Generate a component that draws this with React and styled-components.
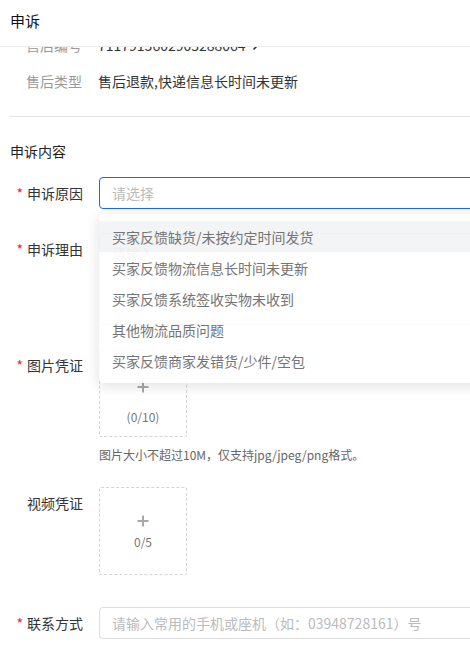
import React, { useLayoutEffect, useRef } from "react";
import styled, { createGlobalStyle } from "styled-components";

const Global = createGlobalStyle`
  html, body { margin: 0; padding: 0; background: #fff; }
  body {
    font-family: "Noto Sans CJK SC", "Noto Sans", sans-serif;
    color: #333;
    overflow: hidden;
  }
  * { box-sizing: border-box; }
`;

const Page = styled.div`
  width: 470px;
  height: 668px;
  display: flex;
  flex-direction: column;
  overflow: hidden;
`;

const Header = styled.header`
  height: 47px;
  flex: none;
  display: flex;
  align-items: center;
  padding: 0 10px 6px;
  font-size: 15px;
  color: #111;
  border-bottom: 1px solid #ebebeb;
  background: #fff;
`;

const Body = styled.div`
  flex: 1;
  overflow-y: auto;
  overflow-x: hidden;
  scrollbar-width: none;
  &::-webkit-scrollbar { display: none; }
  padding: 12px 0 40px 10px;
`;

const InfoRow = styled.div`
  display: flex;
  align-items: center;
  height: 36px;
  font-size: 14px;
`;

const InfoLabel = styled.div`
  width: 72px;
  text-align: right;
  color: #999;
  margin-right: 16px;
  flex: none;
`;

const InfoValue = styled.div`
  color: #333;
  display: flex;
  align-items: center;
  gap: 6px;
  white-space: nowrap;
`;

const Divider = styled.div`
  height: 1px;
  background: #e4e4e4;
  margin: 17px 0 0 -1px;
`;

const SectionTitle = styled.div`
  margin-top: 24px;
  line-height: 20px;
  font-size: 14px;
  color: #222;
`;

const Form = styled.div`
  margin-top: 16px;
  display: flex;
  flex-direction: column;
`;

const FormItem = styled.div`
  display: flex;
  align-items: flex-start;
  margin-bottom: ${(p) => p.$gap ?? 24}px;
`;

const Label = styled.div`
  width: 73px;
  flex: none;
  margin-right: 16px;
  display: flex;
  justify-content: flex-end;
  align-items: center;
  line-height: 32px;
  font-size: 14px;
  color: #333;
  white-space: nowrap;
`;

const Star = styled.span`
  color: #f5222d;
  margin-right: 4px;
  font-size: 14px;
`;

const Control = styled.div`
  position: relative;
  display: flex;
  flex-direction: column;
  flex: none;
`;

const InputBox = styled.div`
  width: 400px;
  height: ${(p) => p.$h || 32}px;
  border: 1px solid ${(p) => (p.$focus ? "#1966ff" : "#dcdcdc")};
  border-radius: 4px;
  padding: ${(p) => (p.$multi ? "8px 12px" : "0 12px")};
  display: flex;
  align-items: ${(p) => (p.$multi ? "flex-start" : "center")};
  font-size: 14px;
  line-height: 22px;
  color: #bbb;
  background: #fff;
  white-space: nowrap;
`;

const Dropdown = styled.ul`
  position: absolute;
  left: 0;
  top: calc(100% + 5px);
  width: 400px;
  margin: 0;
  padding: 7px 0;
  list-style: none;
  background: #fff;
  border-radius: 4px;
  box-shadow: 0 3px 14px rgba(0, 0, 0, 0.13);
  opacity: 0.9;
  z-index: 5;
`;

const Option = styled.li`
  height: 31px;
  display: flex;
  align-items: center;
  padding: 0 13px;
  font-size: 14px;
  color: #666;
  background: ${(p) => (p.$active ? "#f2f3f5" : "transparent")};
`;

const Upload = styled.div`
  width: 88px;
  height: 88px;
  border: 1px dashed #d4d4d4;
  border-radius: 2px;
  display: flex;
  flex-direction: column;
  align-items: center;
  justify-content: center;
  gap: ${(p) => p.$gap}px;
  padding-top: ${(p) => p.$pt}px;
  color: #777;
  font-size: 12px;
  line-height: 16px;
`;

const Hint = styled.div`
  margin-top: 10px;
  font-size: 12px;
  line-height: 16px;
  color: #666;
  white-space: nowrap;
`;

const Plus = () => (
  <svg width="12" height="12" viewBox="0 0 12 12">
    <path d="M6 0.5V11.5M0.5 6H11.5" stroke="#a8a8a8" strokeWidth="2" fill="none" />
  </svg>
);

const Chevron = () => (
  <svg width="8" height="12" viewBox="0 0 8 12">
    <path d="M1.5 1.5L6 6L1.5 10.5" stroke="#333" strokeWidth="1.6" fill="none" />
  </svg>
);

const options = [
  "买家反馈缺货/未按约定时间发货",
  "买家反馈物流信息长时间未更新",
  "买家反馈系统签收实物未收到",
  "其他物流品质问题",
  "买家反馈商家发错货/少件/空包",
];

export default function App() {
  const ref = useRef(null);
  useLayoutEffect(() => {
    if (ref.current) ref.current.scrollTop = 68;
  }, []);
  return (
    <>
      <Global />
      <Page>
        <Header>申诉</Header>
        <Body ref={ref}>
          <InfoRow>
            <InfoLabel>订单编号</InfoLabel>
            <InfoValue>6931805527417760123</InfoValue>
          </InfoRow>
          <InfoRow>
            <InfoLabel>售后编号</InfoLabel>
            <InfoValue>
              7117913602905288064 <Chevron />
            </InfoValue>
          </InfoRow>
          <InfoRow>
            <InfoLabel>售后类型</InfoLabel>
            <InfoValue>售后退款,快递信息长时间未更新</InfoValue>
          </InfoRow>
          <Divider />
          <SectionTitle>申诉内容</SectionTitle>
          <Form>
            <FormItem>
              <Label>
                <Star>*</Star>申诉原因
              </Label>
              <Control>
                <InputBox $focus>请选择</InputBox>
                <Dropdown>
                  {options.map((o, i) => (
                    <Option key={o} $active={i === 0}>
                      {o}
                    </Option>
                  ))}
                </Dropdown>
              </Control>
            </FormItem>
            <FormItem>
              <Label>
                <Star>*</Star>申诉理由
              </Label>
              <Control>
                <InputBox $multi $h={92}>请输入</InputBox>
              </Control>
            </FormItem>
            <FormItem>
              <Label>
                <Star>*</Star>图片凭证
              </Label>
              <Control>
                <Upload $gap={16} $pt={20}>
                  <Plus />
                  <span>(0/10)</span>
                </Upload>
                <Hint>图片大小不超过10M，仅支持jpg/jpeg/png格式。</Hint>
              </Control>
            </FormItem>
            <FormItem $gap={32}>
              <Label>视频凭证</Label>
              <Control>
                <Upload $gap={7} $pt={3}>
                  <Plus />
                  <span>0/5</span>
                </Upload>
              </Control>
            </FormItem>
            <FormItem>
              <Label>
                <Star>*</Star>联系方式
              </Label>
              <Control>
                <InputBox>请输入常用的手机或座机（如：03948728161）号</InputBox>
              </Control>
            </FormItem>
          </Form>
        </Body>
      </Page>
    </>
  );
}
